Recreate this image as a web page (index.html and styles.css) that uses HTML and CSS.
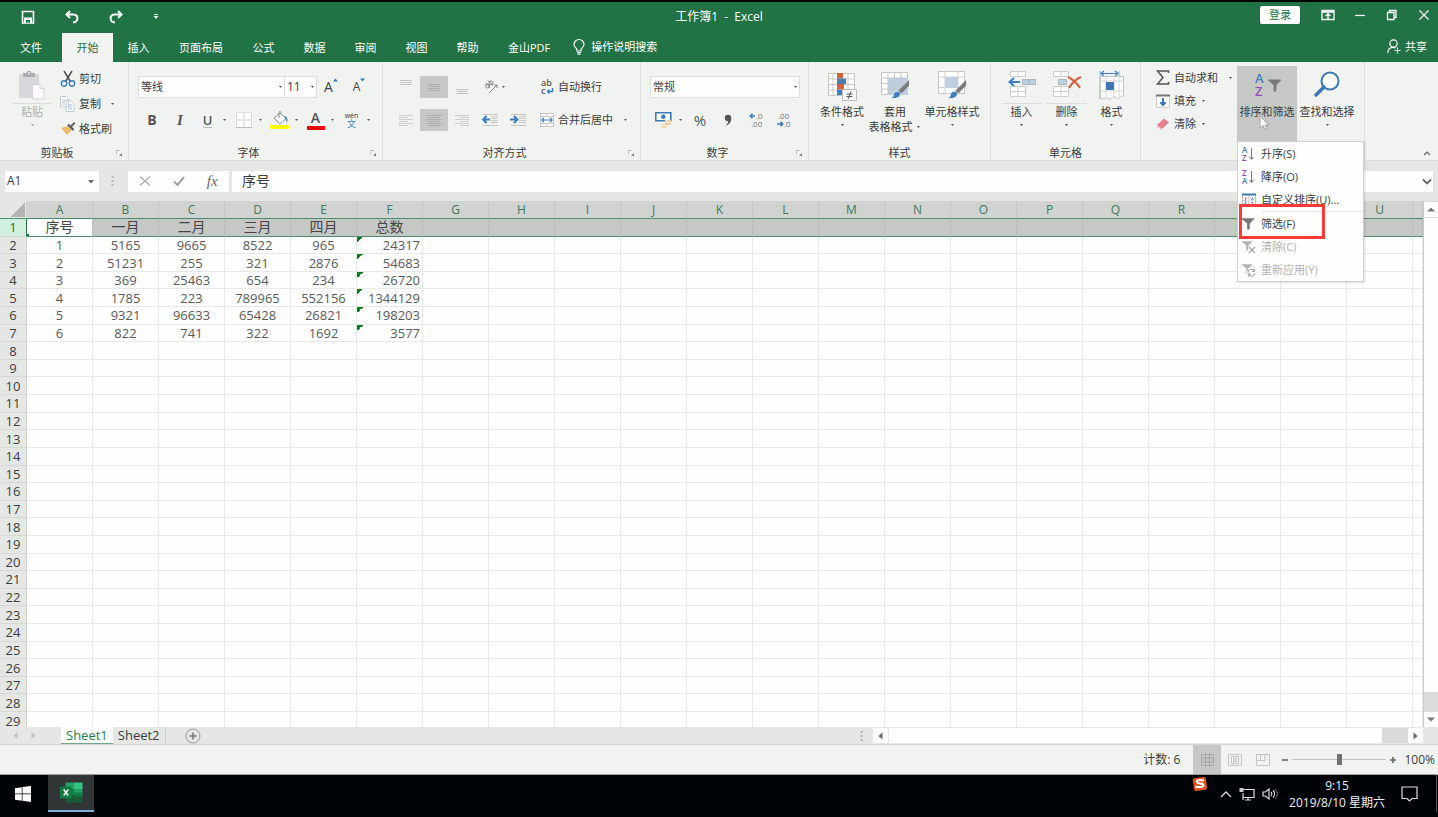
FILE: index.html
```html
<!DOCTYPE html>
<html lang="zh-CN">
<head>
<meta charset="utf-8">
<title>工作簿1 - Excel</title>
<link rel="stylesheet" href="styles.css">
</head>
<body>
<svg class="defs" aria-hidden="true">
  <symbol id="caret" viewBox="0 0 7 4"><path d="M2 1h3L3.500 3z" fill="#555"/></symbol>
  <symbol id="launcher" viewBox="0 0 8 8"><path d="M1.500 5V1.500H5" fill="none" stroke="#bbb"/><path d="M7 4v3H4z" fill="#777"/></symbol>
  <symbol id="brush" viewBox="0 0 22 22"><path d="M21 1v6l-9 9-3-3z" fill="#7c7c7c"/><path d="M8 13c3-.5 5 2 3.500 4.500C9.500 20.500 5 21 1 20.500c3-1 3-2 3.500-4C5 14.500 6 13.300 8 13z" fill="#4480b8" stroke="#fff" stroke-width=".8"/></symbol>
  <symbol id="funnel" viewBox="0 0 14 14"><path d="M0 1h14v1L9 7v7H6V7L0 2z"/></symbol>
</svg>

<header class="titlebar">
  <div class="quick">
    <button aria-label="保存"><svg width="14" height="14" viewBox="0 0 14 14"><path d="M1.500 1.500h11V13h-11z" fill="none" stroke="#fff" stroke-width="1.600"/><path d="M3 7.500h8V13H3z" fill="#fff"/><path d="M5 10h4v3H7.500v-1.500H6.500V13H5z" fill="#217346"/></svg></button>
    <button aria-label="撤消"><svg width="14" height="14" viewBox="0 0 14 14"><path d="M5 1L1.500 4.500 5 8M2 4.500h6.500C14 5 13.500 12 8 12.500" fill="none" stroke="#fff" stroke-width="2"/></svg></button>
    <button aria-label="恢复"><svg width="14" height="14" viewBox="0 0 14 14"><path d="M9 1l3.500 3.500L9 8M12 4.500H5.500C0 5 .5 12 6 12.500" fill="none" stroke="#fff" stroke-width="2"/></svg></button>
    <button aria-label="自定义快速访问工具栏"><svg width="6" height="6" viewBox="0 0 6 6"><path d="M1 .5h4" stroke="#fff"/><path d="M.5 2h5L3 5z" fill="#fff"/></svg></button>
  </div>
  <h1 class="title">工作簿1&nbsp; -&nbsp; Excel</h1>
  <div class="window-tools">
    <button class="login">登录</button>
    <button class="win" aria-label="功能区显示选项"><svg width="14" height="12" viewBox="0 0 14 12"><path d="M1 1.500h12v9H1zM1 3h12" fill="none" stroke="#fff" stroke-width="1.300"/><path d="M7 10V5M4.500 7L7 4.700 9.500 7" fill="none" stroke="#fff" stroke-width="1.400"/></svg></button>
    <button class="win" aria-label="最小化"><svg width="12" height="12" viewBox="0 0 12 12"><path d="M1 6.500h10" stroke="#fff" stroke-width="1.200"/></svg></button>
    <button class="win" aria-label="还原"><svg width="12" height="12" viewBox="0 0 12 12"><path d="M1.500 3.500h6.500v7H1.500zM3.500 3V1.500H10v7H8.500" fill="none" stroke="#fff" stroke-width="1.300"/></svg></button>
    <button class="win" aria-label="关闭"><svg width="12" height="12" viewBox="0 0 12 12"><path d="M1.500 1.500l9 9M10.500 1.500l-9 9" stroke="#fff" stroke-width="1.300"/></svg></button>
  </div>
</header>

<nav class="tabs">
  <button class="tab file">文件</button>
  <button class="tab active">开始</button>
  <button class="tab">插入</button>
  <button class="tab wide">页面布局</button>
  <button class="tab">公式</button>
  <button class="tab">数据</button>
  <button class="tab">审阅</button>
  <button class="tab">视图</button>
  <button class="tab">帮助</button>
  <button class="tab wide">金山PDF</button>
  <button class="tell"><svg width="12" height="16" viewBox="0 0 12 16"><path d="M4 12v-1.500C3.500 9 1 8 1 5.500a5 5 0 0 1 10 0C11 8 8.500 9 8 10.500V12zM4 13.500h4M4.500 15.200h3" fill="none" stroke="#fff" stroke-width="1.200"/></svg>操作说明搜索</button>
  <button class="share"><svg width="14" height="15" viewBox="0 0 14 15"><circle cx="6.500" cy="4.500" r="3.700" fill="none" stroke="#fff" stroke-width="1.200"/><path d="M.8 14C1 10.500 3 8.300 6 8.300c1 0 1.800.2 2.500.6M10.500 8.500v6M7.500 11.500h6" fill="none" stroke="#fff" stroke-width="1.200"/></svg>共享</button>
</nav>

<main class="ribbon">
  <section class="group clipboard">
    <div class="body">
      <button class="big paste" disabled>
        <svg width="28" height="30" viewBox="0 0 28 30"><path d="M1 3h20v24H1z" fill="#d9d6dc"/><path d="M5 2h3.500c0-3 5-3 5 0H17v4H5z" fill="#aeacae"/><circle cx="11" cy="2" r="1" fill="#f1f3f1"/><path d="M14.500 13.500h7.500l4 4V28H14.500z" fill="#fbf8fd" stroke="#d5d2d8"/><path d="M22 13.500v4h4" fill="none" stroke="#d5d2d8"/></svg>
        <span class="rule"></span><span>粘贴</span><svg class="caret"><use href="#caret"/></svg>
      </button>
      <div class="stack">
        <button class="small"><svg width="16" height="16" viewBox="0 0 16 16"><path d="M4 0l6.500 10.500M12 0L5.500 10.500" stroke="#555" stroke-width="1.600"/><circle cx="4" cy="12.500" r="2.700" fill="none" stroke="#4080c0" stroke-width="1.400"/><circle cx="12" cy="12.500" r="2.700" fill="none" stroke="#4080c0" stroke-width="1.400"/></svg>剪切</button>
        <button class="small"><svg width="16" height="16" viewBox="0 0 16 16"><path d="M.5.500H6L8.500 3v8h-8zM6 4.500h4.500L14 7.500v8H6z" fill="#fff" stroke="#c4ccd2"/><path d="M2 4h3M2 6h3M2 8h3M8 9h4M8 11h4M8 13h4" stroke="#a5c4e2"/></svg>复制<svg class="caret push"><use href="#caret"/></svg></button>
        <button class="small"><svg width="16" height="16" viewBox="0 0 16 16"><path d="M1 7l7-2 4 4-5 5z" fill="#ebbd72"/><path d="M7 4l2-1 5 5-1 2z" fill="#555"/><path d="M10 5l4-4 1.500 1.500-4 4z" fill="#666"/></svg>格式刷</button>
      </div>
    </div>
    <footer>剪贴板<button class="launch" aria-label="剪贴板选项"><svg width="8" height="8"><use href="#launcher"/></svg></button></footer>
  </section>

  <section class="group font">
    <div class="body rows">
      <div class="row">
        <label class="combo font-name"><select aria-label="字体"><option>等线</option></select><svg class="caret"><use href="#caret"/></svg></label>
        <label class="combo font-size"><select aria-label="字号"><option>11</option></select><svg class="caret"><use href="#caret"/></svg></label>
        <button class="tool grow-font" aria-label="增大字号"><span class="letter">A</span><svg width="5" height="4" viewBox="0 0 5 4"><path d="M0 3.500h5L2.500.500z" fill="#3a78b4"/></svg></button>
        <button class="tool grow-font" aria-label="减小字号"><span class="letter less">A</span><svg width="5" height="4" viewBox="0 0 5 4"><path d="M0 .500h5L2.500 3.500z" fill="#3a78b4"/></svg></button>
      </div>
      <div class="row">
        <button class="tool bold">B</button>
        <button class="tool italic">I</button>
        <button class="combo-tool"><span class="under">U</span><svg class="caret"><use href="#caret"/></svg></button>
        <button class="combo-tool" aria-label="边框"><svg width="16" height="16" viewBox="0 0 16 16"><path d="M.5.500h15v15H.5z" fill="#fff" stroke="#dcdcdc"/><path d="M8 1v14M1 8h14" stroke="#d2d2d2"/><path d="M0 15.500h16" stroke="#bbb"/></svg><svg class="caret"><use href="#caret"/></svg></button>
        <button class="combo-tool" aria-label="填充颜色"><svg width="19" height="18" viewBox="0 0 19 18"><path d="M4 7l6-5 6 5.500-6 5.500z" fill="#fff" stroke="#999"/><path d="M9 7V1.500C9 0 11 0 11 2" fill="none" stroke="#888"/><path d="M14 5c3 0 4 3 3 7-1-2-1-4-2-5z" fill="#3f7fc0"/><path d="M0 14h19v4H0z" fill="#ff0"/></svg><svg class="caret"><use href="#caret"/></svg></button>
        <button class="combo-tool" aria-label="字体颜色"><span class="color-a">A</span><svg class="caret"><use href="#caret"/></svg></button>
        <button class="combo-tool" aria-label="拼音"><span class="pinyin"><small>wén</small><b>文</b></span><svg class="caret"><use href="#caret"/></svg></button>
      </div>
    </div>
    <footer>字体<button class="launch" aria-label="字体选项"><svg width="8" height="8"><use href="#launcher"/></svg></button></footer>
  </section>

  <section class="group align">
    <div class="body rows">
      <div class="row">
        <button class="tool" aria-label="顶端对齐"><svg width="14" height="16" viewBox="0 0 14 16"><path d="M1 1.500h12M2 3.500h10M1 5.500h12" stroke="#c2c3c2"/></svg></button>
        <button class="tool on" aria-label="垂直居中"><svg width="16" height="16" viewBox="0 0 16 16"><path d="M1 5.500h14M2 7.500h12M1 9.500h14M2 11.500h12" stroke="#adaead"/></svg></button>
        <button class="tool" aria-label="底端对齐"><svg width="14" height="16" viewBox="0 0 14 16"><path d="M1 10.500h12M2 12.500h10M1 14.500h12" stroke="#c2c3c2"/></svg></button>
        <button class="orient" aria-label="方向"><svg width="14" height="14" viewBox="0 0 14 14"><circle cx="3.500" cy="6" r="2" fill="none" stroke="#888"/><circle cx="7" cy="3" r="2" fill="none" stroke="#888"/><path d="M2 3l4 5M4 .500l5 5M5 13l8-8M10 5h3v3" fill="none" stroke="#888"/></svg><svg class="caret"><use href="#caret"/></svg></button>
        <button class="small lead"><svg width="14" height="16" viewBox="0 0 14 16"><text x="1" y="7" class="ab">ab</text><text x="1" y="15" class="ab">c</text><path d="M12.500 9v3.500H8M9.500 10.500L7.500 12.500l2 2" fill="none" stroke="#3f7fc0" stroke-width="1.500"/></svg>自动换行</button>
      </div>
      <div class="row">
        <button class="tool" aria-label="左对齐"><svg width="14" height="12" viewBox="0 0 14 12"><path d="M0 1.500h14M0 3.500h9M0 5.500h14M0 7.500h9M0 9.500h14M0 11.500h9" stroke="#cccdcc"/></svg></button>
        <button class="tool on" aria-label="居中"><svg width="16" height="12" viewBox="0 0 16 12"><path d="M0 1.500h16M2 3.500h12M0 5.500h16M2 7.500h12M0 9.500h16M2 11.500h12" stroke="#adaead"/></svg></button>
        <button class="tool" aria-label="右对齐"><svg width="14" height="12" viewBox="0 0 14 12"><path d="M0 1.500h14M5 3.500h9M0 5.500h14M5 7.500h9M0 9.500h14M5 11.500h9" stroke="#cccdcc"/></svg></button>
        <button class="tool" aria-label="减少缩进量"><svg width="16" height="14" viewBox="0 0 16 14"><path d="M1 1.500h15M9 3.500h7M9 5.500h7M9 7.500h7M9 9.500h7M1 12.500h15" stroke="#c6c7c6"/><path d="M8 6.500H1.500M4.500 3L1.300 6.500l3.200 3.500" fill="none" stroke="#3f7fc0" stroke-width="2.200"/></svg></button>
        <button class="tool" aria-label="增加缩进量"><svg width="16" height="14" viewBox="0 0 16 14"><path d="M1 1.500h15M9 3.500h7M9 5.500h7M9 7.500h7M9 9.500h7M1 12.500h15" stroke="#c6c7c6"/><path d="M0 6.500h6.500M4 3l3.200 3.500L4 10" fill="none" stroke="#3f7fc0" stroke-width="2.200"/></svg></button>
        <button class="small lead"><svg width="14" height="14" viewBox="0 0 14 14"><path d="M.5.500h13v13H.5zM.5 3.500h13M.5 10.500h13M7 .500v3M7 10.500v3" fill="#fff" stroke="#c6c7c6"/><path d="M2 7h10M4 4.800L1.800 7 4 9.200M10 4.800L12.200 7 10 9.200" fill="none" stroke="#3f7fc0" stroke-width="1.200"/></svg>合并后居中<svg class="caret push"><use href="#caret"/></svg></button>
      </div>
    </div>
    <footer>对齐方式<button class="launch" aria-label="对齐选项"><svg width="8" height="8"><use href="#launcher"/></svg></button></footer>
  </section>

  <section class="group number">
    <div class="body rows">
      <div class="row"><label class="combo format"><select aria-label="数字格式"><option>常规</option></select><svg class="caret"><use href="#caret"/></svg></label></div>
      <div class="row">
        <button class="combo-tool" aria-label="会计数字格式"><svg width="17" height="16" viewBox="0 0 17 16"><path d="M.800.800h15v8H.800z" fill="#fff" stroke="#3c78b4" stroke-width="1.600"/><circle cx="8.300" cy="4.800" r="2.200" fill="#3c78b4"/><path d="M10 8h6v5h-6zM6 12h6v3.500H6z" fill="#f0cfa2"/><path d="M10 10h6M6 13.500h6" stroke="#f8eddc"/></svg><svg class="caret"><use href="#caret"/></svg></button>
        <button class="tool percent">%</button>
        <button class="tool" aria-label="千位分隔样式"><svg width="8" height="12" viewBox="0 0 8 12"><circle cx="4" cy="4" r="3.200" fill="#555"/><path d="M7.200 4C7.500 8 5 11 1.500 11.500 4 10 4.500 8 4 6z" fill="#555"/></svg></button>
        <button class="tool" aria-label="增加小数位数"><svg width="14" height="16" viewBox="0 0 14 16"><path d="M6 4H1.500M3.500 1.800L1.300 4l2.200 2.200" fill="none" stroke="#3f7fc0" stroke-width="1.700"/><text x="7" y="7" class="dec">.0</text><text x="2" y="15" class="dec">.00</text></svg></button>
        <button class="tool" aria-label="减少小数位数"><svg width="14" height="16" viewBox="0 0 14 16"><text x="1" y="7" class="dec">.00</text><path d="M0 12h5.500M3.500 9.800L5.700 12l-2.200 2.200" fill="none" stroke="#3f7fc0" stroke-width="1.700"/><text x="7" y="15" class="dec">.0</text></svg></button>
      </div>
    </div>
    <footer>数字<button class="launch" aria-label="数字选项"><svg width="8" height="8"><use href="#launcher"/></svg></button></footer>
  </section>

  <section class="group styles">
    <div class="body">
      <button class="big w52"><svg width="30" height="30" viewBox="0 0 30 30"><path d="M1.500 2.500h26v22h-26z" fill="#fff" stroke="#c4c6c4"/><path d="M1.500 8h26M1.500 13.500h26M1.500 19h26M6 2.500v22M21 2.500v22" stroke="#c9cbc9"/><path d="M10 2h6v5.500h-6zM10 13h7v5.500h-7z" fill="#d5613f"/><path d="M10 7.500h9V13h-9zM10 18.500h5V24h-5z" fill="#4480b8"/><path d="M15.500 18.500h14v11h-14z" fill="#fff" stroke="#bbb"/><path d="M19.500 23h6M19.500 25.500h6M24 20.500l-3 7.500" stroke="#555"/></svg><span>条件格式</span><svg class="caret"><use href="#caret"/></svg></button>
      <button class="big w54"><svg width="30" height="30" viewBox="0 0 30 30"><path d="M1.500 1.500h26v22h-26z" fill="#fff" stroke="#c4c6c4"/><path d="M8 7h20v17H8z" fill="#bcd0e2"/><path d="M1.500 7h26M1.500 12.500h26M1.500 18h26M8 1.500v22M14.500 1.500v22M21 1.500v22" stroke="#c2c8cc"/><use href="#brush" x="9" y="8" width="21" height="21"/></svg><span>套用</span><span class="with-caret">表格格式<svg class="caret"><use href="#caret"/></svg></span></button>
      <button class="big w60"><svg width="30" height="30" viewBox="0 0 30 30"><path d="M1.500.500h26v22h-26z" fill="#fff" stroke="#c4c6c4"/><path d="M1.500 6h26M1.500 16.500h26M8 .500v22M21 .500v22" stroke="#d0d2d0"/><path d="M8 6h13v10.500H8z" fill="#bcd0e2"/><use href="#brush" x="9" y="8" width="21" height="21"/></svg><span>单元格样式</span><svg class="caret"><use href="#caret"/></svg></button>
    </div>
    <footer>样式</footer>
  </section>

  <section class="group cells">
    <div class="body">
      <button class="big w45"><svg width="28" height="30" viewBox="0 0 28 30"><path d="M2.500.500h15v5h-15zM10 .500v5M2.500 15.500h15v10h-15zM2.500 20.500h15M10 15.500v10" fill="#fff" stroke="#cccecc"/><path d="M14.500 8.500h13v5h-13zM21 8.500v5" fill="#bcd0e2" stroke="#a9b5bf"/><path d="M12 11H2M6 7l-4.500 4L6 15" fill="none" stroke="#3f7fc0" stroke-width="2"/></svg><span class="rule"></span><span>插入</span><svg class="caret"><use href="#caret"/></svg></button>
      <button class="big w45"><svg width="28" height="30" viewBox="0 0 28 30"><path d="M.500.500h15v5h-15zM8 .500v5M.500 15.500h15v10h-15zM.500 20.500h15M8 15.500v10" fill="#fff" stroke="#cccecc"/><path d="M5.500 8.500h8v5h-8z" fill="#bcd0e2" stroke="#a9b5bf"/><path d="M15 6c4 2 9 6 12 11M28 6c-5 2-9 6-12 11" fill="none" stroke="#d5613f" stroke-width="2"/></svg><span class="rule"></span><span>删除</span><svg class="caret"><use href="#caret"/></svg></button>
      <button class="big w45"><svg width="26" height="30" viewBox="0 0 26 30"><path d="M1 0v28M20 0v5" stroke="#8fb6dc"/><path d="M2 2.500h17M5 0L2 2.500 5 5M16 0l3 2.500L16 5" fill="none" stroke="#3f7fc0" stroke-width="1.200"/><path d="M1.500 5.500h23v20c-3-2-3 3-6 2s-2-3-5-1-2 2-5 1-4 1-7 0z" fill="#fff" stroke="#c0c2c0"/><path d="M1.500 10h23M1.500 20h23M7 5.500v21M15 5.500v21M20 5.500v21" stroke="#d3d5d3"/><path d="M7 11h8v8H7z" fill="#3c78b4"/></svg><span class="rule none"></span><span>格式</span><svg class="caret"><use href="#caret"/></svg></button>
    </div>
    <footer>单元格</footer>
  </section>

  <section class="group editing">
    <div class="body">
      <div class="stack tight">
        <button class="small"><svg width="14" height="15" viewBox="0 0 14 15"><path d="M12.500 3V1H1.500L7 7.500 1.500 14h11v-2" fill="none" stroke="#555" stroke-width="1.500"/></svg>自动求和<svg class="caret push"><use href="#caret"/></svg></button>
        <button class="small"><svg width="14" height="14" viewBox="0 0 14 14"><path d="M.5 1.500h13v12H.5z" fill="#fff" stroke="#ccc"/><path d="M0 1.500h14" stroke="#777" stroke-width="2"/><path d="M7 4v7M4.300 8.300L7 11l2.700-2.700" fill="none" stroke="#3c78b4" stroke-width="2"/></svg>填充<svg class="caret"><use href="#caret"/></svg></button>
        <button class="small"><svg width="14" height="14" viewBox="0 0 14 14"><path d="M1 8l7-6.500 5 4L6 12z" fill="#e6808f"/><path d="M1 8l5 4v1.500L1 10z" fill="#f4bcc4"/></svg>清除<svg class="caret"><use href="#caret"/></svg></button>
      </div>
      <div class="menu-anchor">
        <button class="big sort"><svg width="28" height="30" viewBox="0 0 28 30"><text x="2" y="12" class="az-a">A</text><text x="2" y="25" class="az-z">Z</text><use href="#funnel" x="15" y="7" width="13" height="14" fill="#777877"/></svg><span>排序和筛选</span><svg class="caret"><use href="#caret"/></svg></button>
        <svg class="pointer" width="12" height="16" viewBox="0 0 12 16"><path d="M1 1v12l3-2.500L6 15l2-1-2-4h4z" fill="#f4f4f4" stroke="#999" stroke-width=".8"/></svg>
        <div class="menu" role="menu">
          <button role="menuitem"><svg width="14" height="14" viewBox="0 0 14 14"><text x="0" y="6" class="mini-a">A</text><text x="0" y="14" class="mini-z">Z</text><path d="M9.500 1v11M7.500 10l2 2.500 2-2.500" fill="none" stroke="#777"/></svg>升序(S)</button>
          <button role="menuitem"><svg width="14" height="14" viewBox="0 0 14 14"><text x="0" y="6" class="mini-z">Z</text><text x="0" y="14" class="mini-a">A</text><path d="M9.500 1v11M7.500 10l2 2.500 2-2.500" fill="none" stroke="#777"/></svg>降序(O)</button>
          <button role="menuitem"><svg width="14" height="14" viewBox="0 0 14 14"><path d="M.5 1.500h13v12H.5zM7 2v12" fill="#fff" stroke="#bbb"/><path d="M0 1.500h14" stroke="#3c78b4" stroke-width="2"/><path d="M2.500 5h2l-2 3h2M9.500 12h2l-2-2.500h2" fill="none" stroke="#9250b5" stroke-width=".8"/><path d="M2.300 12l1.200-3 1.200 3M9.300 7.500l1.200-3 1.200 3" fill="none" stroke="#3c78b4" stroke-width=".8"/></svg>自定义排序(U)...</button>
          <hr>
          <button role="menuitem"><svg width="14" height="14" fill="#777"><use href="#funnel" width="12" height="13"/></svg>筛选(F)</button>
          <button role="menuitem" disabled><svg width="14" height="14" viewBox="0 0 14 14" fill="#b2b3b2"><use href="#funnel" width="10" height="11"/><path d="M7 7l6 6M13 7l-6 6" stroke="#fff" stroke-width="3"/><path d="M7 7l6 6M13 7l-6 6" stroke="#aaa" stroke-width="1.400"/></svg>清除(C)</button>
          <button role="menuitem" disabled><svg width="14" height="14" viewBox="0 0 14 14" fill="#b2b3b2"><use href="#funnel" width="10" height="11"/><circle cx="9.500" cy="9.500" r="4.500" fill="#fff"/><path d="M6.200 9.500a3.300 3.300 0 0 1 6-1.700M12.500 6v2.500H10M13 10a3.300 3.300 0 0 1-6 1.700M6.500 13.500V11H9" fill="none" stroke="#aaa" stroke-width="1.200"/></svg>重新应用(Y)</button>
          <span class="highlight"></span>
        </div>
      </div>
      <button class="big w60"><svg width="28" height="30" viewBox="0 0 28 30"><circle cx="17" cy="10" r="8.500" fill="#fff" stroke="#3c78b4" stroke-width="2"/><path d="M11 16l-8 8" stroke="#3c78b4" stroke-width="3.500" stroke-linecap="round"/></svg><span>查找和选择</span><svg class="caret"><use href="#caret"/></svg></button>
    </div>
    <footer></footer>
  </section>
  <button class="collapse" aria-label="折叠功能区"><svg width="8" height="6" viewBox="0 0 8 6"><path d="M1 5l3-3 3 3" fill="none" stroke="#666" stroke-width="1.200"/></svg></button>
</main>

<section class="formula">
  <div class="name-box"><input aria-label="名称框" value="A1"><button aria-label="名称列表"><svg width="8" height="5" viewBox="0 0 8 5"><path d="M1 1h6L4 4.500z" fill="#666"/></svg></button></div>
  <svg class="dots" width="3" height="10" viewBox="0 0 3 10"><path d="M.5 0h2v2h-2zM.5 4h2v2h-2zM.5 8h2v2h-2z" fill="#b5b6b5"/></svg>
  <div class="fx">
    <button aria-label="取消"><svg width="12" height="12" viewBox="0 0 12 12"><path d="M1 1.500l10 9M11 1.500l-10 9" stroke="#b0b1b0" stroke-width="1.400"/></svg></button>
    <button aria-label="输入"><svg width="12" height="12" viewBox="0 0 12 12"><path d="M1 6.500l3.500 3.500L11 2" fill="none" stroke="#a0a1a0" stroke-width="2"/></svg></button>
    <button class="fx-label">fx</button>
  </div>
  <input class="formula-input" aria-label="编辑栏" value="序号">
  <button class="expand" aria-label="展开编辑栏"><svg width="10" height="7" viewBox="0 0 10 7"><path d="M1 1.500l4 4 4-4" fill="none" stroke="#666" stroke-width="1.800"/></svg></button>
</section>

<section class="workspace">
  <div class="sheet"><table class="cells-table">
    <colgroup id="cols"><col class="col-head"></colgroup>
    <thead><tr id="head"><th class="corner"></th></tr></thead>
    <tbody id="rows"></tbody>
  </table></div>
  <div class="vscroll">
    <button aria-label="向上滚动"><svg width="8" height="5" viewBox="0 0 8 5"><path d="M0 4.500h8L4 .5z" fill="#777"/></svg></button>
    <div class="vthumb"></div>
    <div class="vtrack"></div>
    <button aria-label="向下滚动"><svg width="8" height="5" viewBox="0 0 8 5"><path d="M0 .5h8L4 4.500z" fill="#777"/></svg></button>
  </div>
</section>

<section class="sheetbar">
  <button class="nav" aria-label="上一个工作表"><svg width="5" height="8" viewBox="0 0 5 8"><path d="M4.500 0v7L.5 3.500z" fill="#bfc0bf"/></svg></button>
  <button class="nav" aria-label="下一个工作表"><svg width="5" height="8" viewBox="0 0 5 8"><path d="M.5 0v7l4-3.500z" fill="#bfc0bf"/></svg></button>
  <button class="sheet-tab current">Sheet1</button>
  <button class="sheet-tab">Sheet2</button>
  <button class="add" aria-label="新工作表"><svg width="16" height="16" viewBox="0 0 16 16"><circle cx="8" cy="8" r="7" fill="none" stroke="#999"/><path d="M8 4.500v7M4.500 8h7" stroke="#777" stroke-width="1.600"/></svg></button>
  <div class="hscroll">
    <svg class="dots" width="3" height="10" viewBox="0 0 3 10"><path d="M.5 0h2v2h-2zM.5 4h2v2h-2zM.5 8h2v2h-2z" fill="#b5b6b5"/></svg>
    <button aria-label="向左滚动"><svg width="5" height="8" viewBox="0 0 5 8"><path d="M4.500 0.500v7L.5 4z" fill="#666"/></svg></button>
    <div class="hthumb"></div><div class="htrack"></div>
    <button aria-label="向右滚动"><svg width="5" height="8" viewBox="0 0 5 8"><path d="M.5 0.500v7l4-3.500z" fill="#666"/></svg></button>
  </div>
</section>

<footer class="status">
  <span class="count">计数: 6</span>
  <button class="view on" aria-label="普通"><svg width="13" height="12" viewBox="0 0 13 12"><path d="M.5.500h12v11H.5zM.5 4h12M.5 8h12M4.500.500v11M8.500.500v11" fill="none" stroke="#a4a5a4"/></svg></button>
  <button class="view" aria-label="页面布局"><svg width="14" height="12" viewBox="0 0 14 12"><path d="M.5.500h13v11H.5zM3.500 2.500h7v7h-7zM5 4.500h4M5 6h4M5 7.500h4" fill="none" stroke="#c4c5c4"/></svg></button>
  <button class="view" aria-label="分页预览"><svg width="14" height="12" viewBox="0 0 14 12"><path d="M.5.500h13v11H.5zM4.500.500v6M9 .500v6M.5 6.500H9" fill="none" stroke="#c4c5c4"/></svg></button>
  <button class="zoom-step" aria-label="缩小"><svg width="8" height="8" viewBox="0 0 8 8"><path d="M1 4h6" stroke="#666" stroke-width="1.600"/></svg></button>
  <input class="zoom" type="range" min="0" max="100" value="50" aria-label="缩放">
  <button class="zoom-step" aria-label="放大"><svg width="8" height="8" viewBox="0 0 8 8"><path d="M1 4h6M4 1v6" stroke="#666" stroke-width="1.600"/></svg></button>
  <span class="percent-text">100%</span>
</footer>

<footer class="taskbar">
  <button class="start" aria-label="开始"><svg width="16" height="16" viewBox="0 0 16 16"><path d="M0 2.200L6.800 1.200v6.300H0zM7.500 1.100L16 0v7.500H7.500zM0 8.300h6.800v6.400L0 13.700zM7.500 8.300H16V16l-8.500-1.200z" fill="#fff"/></svg></button>
  <button class="app" aria-label="Excel"><svg width="23" height="21" viewBox="0 0 23 21"><path d="M5.500.500h8.500v7H5.500z" fill="#21a366"/><path d="M14 .500h8.500v7H14z" fill="#33c481"/><path d="M5.500 7.500H14v6H5.500z" fill="#107c41"/><path d="M14 7.500h8.500v6H14z" fill="#21a366"/><path d="M5.500 13.500h17v7h-17z" fill="#185c37"/><path d="M14 10.500h8.500v4H14z" fill="#107c41"/><rect x="0" y="4.500" width="12" height="12" rx="1" fill="#107c41"/><path d="M3.700 7.500l4.600 6M8.300 7.500l-4.600 6" stroke="#fff" stroke-width="1.500"/></svg></button>
  <div class="tray">
    <svg class="sogou" width="16" height="16" viewBox="0 0 16 16"><rect x="1.500" y="1.500" width="13" height="13" rx="2" fill="#e2571f" transform="rotate(-8 8 8)"/><path d="M12 4.500C8 3.500 4.500 4 5 6s6 1 6.500 3-4 2.500-8 1.800" fill="none" stroke="#fff" stroke-width="2"/></svg>
    <svg width="12" height="8" viewBox="0 0 12 8"><path d="M1 7l5-5 5 5" fill="none" stroke="#ddd" stroke-width="1.300"/></svg>
    <svg width="16" height="14" viewBox="0 0 16 14"><path d="M4 2.500h11v8H4M4 6v7M6 13h6M9 10.500V13" fill="none" stroke="#ddd" stroke-width="1.200"/><path d="M.5 1h4v4h-4z" fill="#ccc"/></svg>
    <svg width="16" height="14" viewBox="0 0 16 14"><path d="M1 5h2.500L7 2v10L3.500 9H1z" fill="none" stroke="#ddd" stroke-width="1.200"/><path d="M9 5c1 1 1 3 0 4M11 3.500c2 2 2 5 0 7" fill="none" stroke="#ddd" stroke-width="1.200"/><path d="M13 2c3 3 3 7 0 10" fill="none" stroke="#777"/></svg>
    <time class="clock"><span>9:15</span><span>2019/8/10 星期六</span></time>
    <svg class="notice" width="17" height="16" viewBox="0 0 17 16"><path d="M1 1h15v11.500h-5L8.500 15 6 12.500H1z" fill="none" stroke="#ddd" stroke-width="1.200"/></svg>
    <span class="desktop"></span>
  </div>
</footer>
<script src="script.js"></script>
</body>
</html>
```
FILE: styles.css
```css
* { box-sizing: border-box; }

body {
  margin: 0;
  height: 100vh;
  display: flex;
  flex-direction: column;
  overflow: hidden;
  border-top: 2px solid #000;
  background: #e5e7e5;
  color: #3c3d3c;
  font: 11px/16px "Open Sans", "Noto Sans CJK SC", sans-serif;
}

button, input, select { font: inherit; color: inherit; }
button { border: 0; padding: 0; background: none; white-space: nowrap; }
input, select { border: 0; border-radius: 0; outline: 0; padding: 0; background: none; min-width: 0; }
svg { display: block; flex: none; overflow: visible; }
.defs { position: absolute; width: 0; height: 0; }
.caret { width: 7px; height: 4px; }

/* Title bar */
.titlebar {
  display: grid;
  grid-template-columns: 1fr auto 1fr;
  align-items: center;
  height: 29px;
  flex: none;
  background: #217346;
  color: #fff;
}
.quick { display: flex; padding-left: 6px; }
.quick button { width: 44px; height: 26px; display: flex; align-items: center; justify-content: center; }
.quick button:last-child { width: 36px; }
.title { margin: 0; font-size: 12px; font-weight: 400; }
.window-tools { display: flex; justify-content: flex-end; align-items: center; gap: 4px; height: 25px; padding-bottom: 3px; }
.login { width: 40px; height: 18px; margin-right: 10px; background: #fff; color: #217346; border-radius: 2px; }
.win { width: 28px; height: 24px; display: flex; align-items: center; justify-content: center; }

/* Ribbon tabs */
.tabs { display: flex; height: 31px; flex: none; background: #217346; color: #fff; }
.tab { width: 51px; height: 31px; padding-top: 2px; }
.tab.file { width: 62px; }
.tab.wide { width: auto; padding: 2px 15px 0; }
.tab.active { background: #f1f3f1; color: #217346; height: 29px; margin-top: 2px; padding: 0; }
.tell, .share { display: flex; align-items: center; gap: 6px; padding: 1px 0 0 8px; }
.share { margin-left: auto; padding: 0 11px 0 0; gap: 4px; }

/* Ribbon */
.ribbon { display: flex; height: 99px; flex: none; background: #f1f3f1; border-bottom: 1px solid #d9dbd9; }
.group { display: flex; flex-direction: column; border-right: 1px solid #dddfdd; }
.body { flex: 1; display: flex; padding-top: 4px; }
.body.rows { flex-direction: column; gap: 11px; padding: 14px 0 0 9px; }
.group > footer { height: 16px; line-height: 18px; text-align: center; position: relative; padding-right: 14px; }
.launch { position: absolute; right: 5px; top: 5px; }
.row { display: flex; height: 22px; }
.clipboard { width: 129px; }
.font { width: 254px; }
.align { width: 258px; }
.number { width: 168px; }
.styles { width: 182px; }
.cells { width: 150px; }
.editing { width: 224px; }
.styles > footer, .cells > footer { padding-right: 0; }

.big { display: flex; flex-direction: column; align-items: center; padding-top: 5px; }
.big > span { line-height: 15px; margin-top: 3px; }
.big > span + .with-caret { margin-top: 0; display: flex; align-items: center; gap: 2px; }
.big > .caret { margin-top: 4px; }
.big > .rule { width: 40px; height: 1px; margin: 2px 0 0; background: #dadcda; }
.big > .rule + span { margin-top: 0; }
.big > .rule.none { background: none; }
.w45 { width: 45px; }
.w52 { width: 52px; }
.w54 { width: 54px; }
.w60 { width: 60px; }
.styles .body { padding-left: 7px; }
.cells .body { padding-left: 8px; }

.paste { width: 40px; margin-left: 12px; color: #adaead; }
.paste .caret { opacity: .5; }
.stack { display: flex; flex-direction: column; padding-left: 8px; }
.small { display: flex; align-items: center; height: 25px; gap: 3px; }
.small .push { margin-left: 5px; }
.stack.tight { width: 96px; padding-left: 15px; }
.tight .small { height: 23px; gap: 4px; }

.combo { display: flex; align-items: center; background: #fdfefd; border: 1px solid #dcdedc; }
.combo select { flex: 1; height: 20px; padding-left: 2px; appearance: none; }
.font-name { width: 147px; }
.font-size { width: 32px; border-left: 0; }
.font-size select { font-size: 12px; }
.format { width: 150px; }
.tool { width: 28px; display: flex; align-items: center; justify-content: center; }
.tool.on { background: #c6c8c6; }
.letter { font-size: 14px; font-weight: 400; color: #444; }
.letter.less { font-size: 12px; }
.bold { font-size: 14px; font-weight: 700; color: #555; }
.grow-font svg { margin-bottom: 14px; }
.italic { font: italic 700 15px "Liberation Serif", serif; color: #555; }
.combo-tool { display: flex; align-items: center; width: 36px; padding-right: 2px; }
.combo-tool > :first-child { margin: 0 auto; }
.combo-tool .caret { margin: 0; }
.under { font-size: 13px; font-weight: 600; line-height: 14px; border-bottom: 1px solid #bbb; color: #555; }
.color-a { width: 18px; font-size: 14px; font-weight: 600; line-height: 16px; border-bottom: 4px solid #f00000; color: #555; }
.pinyin { display: flex; flex-direction: column; align-items: center; }
.pinyin small { font-size: 7px; line-height: 7px; }
.pinyin b { font-size: 9px; line-height: 9px; font-weight: 400; color: #3f7fc0; }
.orient { display: flex; align-items: center; gap: 2px; width: 56px; padding-left: 8px; }
.lead { height: 22px; margin-left: 8px; gap: 4px; }
.ab { font: 600 9px "Open Sans", sans-serif; fill: #555; }
.dec { font: 8px "Open Sans", sans-serif; fill: #777; }
.percent { font-size: 15px; color: #555; }

/* Sort menu */
.menu-anchor { position: relative; width: 60px; }
.sort { width: 60px; height: 75px; background: #c6c8c6; }
.az-a, .az-z { font: 600 13px "Open Sans", sans-serif; fill: #3f7fc0; }
.az-z { fill: #9250b5; }
.mini-a, .mini-z { font: 600 8px "Open Sans", sans-serif; fill: #3c78b4; }
.mini-z { fill: #9250b5; }
.pointer { position: absolute; left: 22px; top: 49px; }
.menu {
  position: absolute;
  left: 0;
  top: 75px;
  z-index: 5;
  width: 127px;
  background: #fdfefd;
  border: 1px solid #d0d2d0;
  box-shadow: 1px 1px 2px #0002;
}
.menu button { display: flex; align-items: center; gap: 5px; width: 100%; height: 23px; padding-left: 4px; }
.menu button:disabled { color: #b2b3b2; }
.menu hr { height: 1px; margin: 0 0 0 24px; border: 0; background: #e3e5e3; }
.highlight { position: absolute; left: 1px; top: 62px; width: 86px; height: 35px; border: 3px solid #fb3a3a; }
.collapse { margin: auto 7px 4px auto; }

/* Formula bar */
.formula { display: flex; align-items: center; height: 40px; flex: none; padding: 0 5px; }
.name-box, .fx, .formula-input { height: 21px; background: #fdfefd; }
.name-box { display: flex; width: 94px; font-size: 12px; padding: 0 4px 0 2px; }
.name-box input { flex: 1; }
.formula .dots { margin: 0 14px 0 12px; }
.fx { display: flex; width: 101px; margin-right: 3px; }
.fx button { width: 34px; display: flex; align-items: center; justify-content: center; }
.fx .fx-label { font: italic 15px "Liberation Serif", serif; color: #666; }
.formula-input { flex: 1; padding: 0 0 2px 10px; font-size: 14px; }
.expand { height: 21px; padding: 0 1px; background: #fdfefd; }

/* Worksheet */
.workspace { display: flex; flex: 1; min-height: 0; }
.sheet { flex: 1; overflow: hidden; background: #fdfefd; }
.cells-table { width: 100%; height: 529px; table-layout: fixed; border-collapse: separate; border-spacing: 0; font-size: 13px; line-height: 14px; }
.col-head { width: 27px; }
.col { width: 66px; }
.cells-table th, .cells-table td { padding: 0; text-align: center; border-right: 1px solid #e8eae8; border-bottom: 1px solid #e8eae8; white-space: nowrap; font-weight: 400; }
.cells-table td { color: #5a5b5a; }
.cells-table thead th { height: 18px; padding-top: 1px; font-size: 12px; background: #d1d3d1; color: #3c7a5a; border-right-color: #c4c6c4; border-bottom-color: #4f8c6d; }
.cells-table tbody th { background: #e5e7e5; border-right-color: #d0d2d0; border-bottom-color: #d6d8d6; }
.cells-table thead .corner { background: linear-gradient(135deg, transparent 50%, #b2b4b2 50%) 11px 2px / 14px 14px no-repeat #e5e7e5; border-right-color: #d0d2d0; }
.cells-table .selected td { background: #c6c8c6; border-right-color: #b9bbb9; border-bottom-color: #4f8c6d; font-size: 14px; color: #444; }
.cells-table .selected th { background: #d2f0e0; color: #217346; border-right-color: #217346; }
.cells-table .selected .active-cell { background: linear-gradient(#217346, #217346) left bottom / 2px 2px no-repeat #fdfefd; }
.cells-table .total { text-align: right; padding-right: 2px; background: linear-gradient(135deg, #0a7d1a 50%, transparent 50%) 0 0 / 6px 6px no-repeat; }

.vscroll { display: flex; flex-direction: column; width: 15px; border-left: 1px solid #c8cac8; background: #dadcda; gap: 1px; padding-top: 1px; }
.vscroll button { height: 15px; background: #fdfefd; display: flex; align-items: center; justify-content: center; }
.vthumb { flex: 1; background: #fdfefd; }
.vtrack { height: 18px; }

/* Sheet tabs */
.sheetbar { display: flex; align-items: center; height: 18px; flex: none; padding-right: 15px; border-bottom: 1px solid #d4d6d4; }
.nav { width: 18px; display: flex; justify-content: center; }
.nav:first-child { margin-left: 6px; }
.sheet-tab { height: 17px; padding: 0 5px 1px; font-size: 13px; line-height: 15px; border-right: 1px solid #cfd1cf; }
.sheet-tab.current { margin-left: 19px; background: #fdfefd; color: #1b8049; border-right: 0; border-bottom: 1px solid #6fa789; padding-bottom: 0; }
.add { margin-left: 19px; }
.hscroll { margin-left: auto; display: flex; align-items: center; flex: 0 1 563px; height: 15px; }
.hscroll .dots { margin-right: 10px; }
.hscroll button { width: 15px; height: 15px; background: #fdfefd; display: flex; align-items: center; justify-content: center; }
.hthumb { flex: 1; height: 15px; margin-left: 1px; background: #fdfefd; }
.htrack { width: 26px; height: 15px; background: #d8dad8; }

/* Status bar */
.status { display: flex; align-items: center; justify-content: flex-end; height: 30px; flex: none; padding-right: 3px; background: #f1f3f1; border-bottom: 1px solid #9b9d9b; font-size: 12px; }
.count { margin-right: 13px; }
.view { width: 28px; height: 29px; display: flex; align-items: center; justify-content: center; }
.view.on { background: #c6c8c6; }
.zoom-step { width: 14px; display: flex; justify-content: center; }
.zoom { width: 94px; height: 14px; margin: 0; appearance: none; background: linear-gradient(#c2c4c2, #c2c4c2) center / 100% 1px no-repeat; }
.zoom::-webkit-slider-thumb { appearance: none; width: 5px; height: 11px; background: #707170; }
.view + .zoom-step { margin-left: 1px; }
.percent-text { margin-left: 4px; }

/* Taskbar */
.taskbar { display: flex; height: 42px; flex: none; padding-bottom: 5px; background: #000306; color: #f0f0f0; font-size: 12px; }
.start { width: 46px; display: flex; align-items: center; justify-content: center; }
.app { width: 46px; margin-left: 2px; display: flex; align-items: center; justify-content: center; background: #323536; border-bottom: 2px solid #76b0d8; }
.tray { margin-left: auto; display: flex; align-items: center; gap: 7px; }
.sogou { align-self: flex-start; margin: 1px 5px 0 0; }
.clock { display: flex; flex-direction: column; align-items: center; line-height: 17px; margin-left: 4px; }
.notice { margin: 0 11px 0 9px; }
.desktop { align-self: stretch; width: 2px; border-left: 1px solid #555; }
```
FILE: script.js
```js
const data = [
  ["序号", "一月", "二月", "三月", "四月", "总数"],
  [1, 5165, 9665, 8522, 965, 24317],
  [2, 51231, 255, 321, 2876, 54683],
  [3, 369, 25463, 654, 234, 26720],
  [4, 1785, 223, 789965, 552156, 1344129],
  [5, 9321, 96633, 65428, 26821, 198203],
  [6, 822, 741, 322, 1692, 3577]
];
const letters = [..."ABCDEFGHIJKLMNOPQRSTU", ""];
const rowCount = 29;

for (const letter of letters) {
  const col = document.createElement("col");
  if (letter) col.className = "col";
  document.getElementById("cols").append(col);
  const th = document.createElement("th");
  th.textContent = letter;
  document.getElementById("head").append(th);
}

for (let r = 0; r < rowCount; r++) {
  const tr = document.createElement("tr");
  if (r === 0) tr.className = "selected";
  const th = document.createElement("th");
  th.textContent = r + 1;
  tr.append(th);
  letters.forEach((_, c) => {
    const td = document.createElement("td");
    const value = data[r] && data[r][c];
    if (value !== undefined) {
      td.textContent = value;
      if (r === 0 && c === 0) td.className = "active-cell";
      if (r > 0 && c === 5) td.className = "total";
    }
    tr.append(td);
  });
  document.getElementById("rows").append(tr);
}
```
